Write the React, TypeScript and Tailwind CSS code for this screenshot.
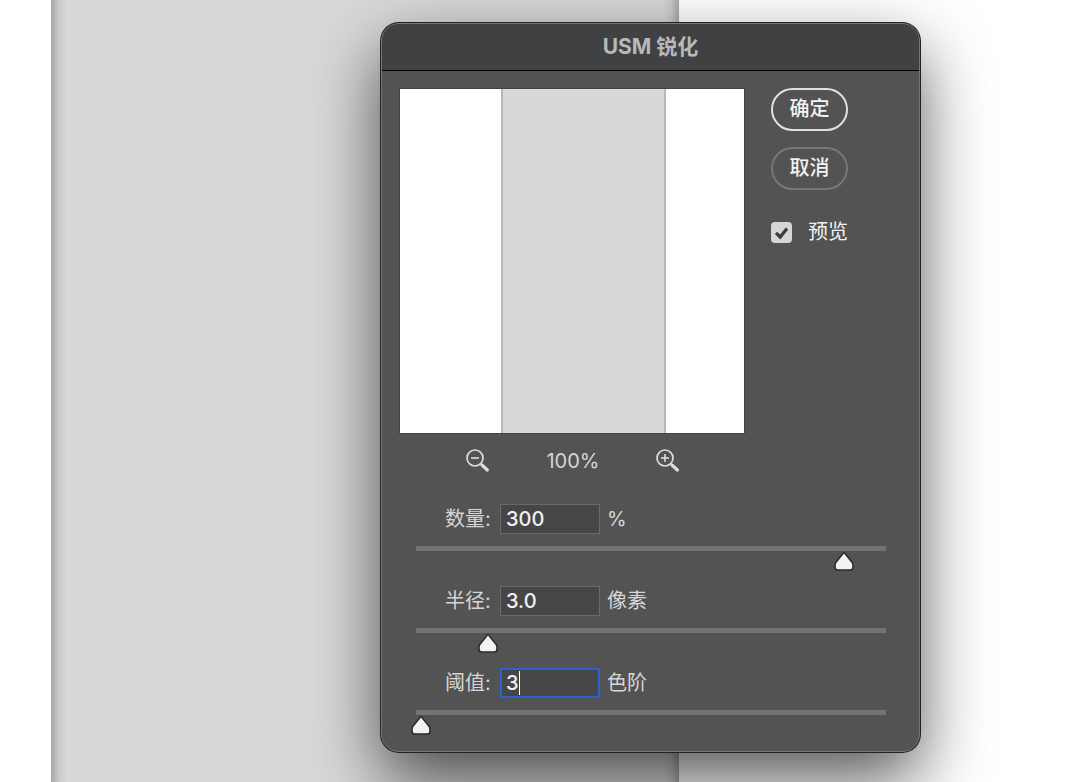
import { useState } from 'react';

interface Field {
    id: string;
    label: string;
    value: string;
    unit: string;
    position: number;
    active?: boolean;
}

const fields: Field[] = [
    { id: 'amount', label: '数量', value: '300', unit: '%', position: 911 },
    { id: 'radius', label: '半径', value: '3.0', unit: '像素', position: 153 },
    { id: 'threshold', label: '阈值', value: '3', unit: '色阶', position: 11, active: true },
];

function ZoomIcon({ plus = false }: { plus?: boolean }) {
    return (
        <svg width="26" height="26" viewBox="0 0 26 26" fill="none" stroke="#dcdcdc">
            <circle cx="10" cy="10" r="8" strokeWidth="1.7" />
            <path d="M6 10h8" strokeWidth="1.6" />
            {plus && <path d="M10 6v8" strokeWidth="1.6" />}
            <path d="M15.8 15.8l2.2 2.2" strokeWidth="2" />
            <path d="M17.2 17.2l5.2 4.8" strokeWidth="3.2" strokeLinecap="round" />
        </svg>
    );
}

function SliderField({ field }: { field: Field }) {
    const [position, setPosition] = useState(field.position);

    return (
        <div>
            <div className="ml-[29px] flex h-[30px] items-center">
                <label htmlFor={field.id} className="w-[55px]">
                    {field.label}:
                </label>
                <div className="relative">
                    <input
                        id={field.id}
                        type="text"
                        defaultValue={field.value}
                        className={`block h-[30px] w-[100px] bg-[#464646] text-[20px] font-medium text-[#f0f0f0] outline-none ${
                            field.active
                                ? 'border-2 border-[#2b62d1] px-1'
                                : 'border border-[#696969] px-[5px]'
                        }`}
                    />
                    {field.active && (
                        <span className="pointer-events-none absolute top-[3px] left-[19px] h-6 w-px bg-white" />
                    )}
                </div>
                <label htmlFor={`${field.id}-slider`} className="ml-[7px]">
                    {field.unit}
                </label>
            </div>
            <div className="relative mt-3 h-[40px]">
                <div className="h-[5px] bg-[#737373]" />
                <svg
                    className="absolute top-[5px] -translate-x-1/2"
                    style={{ left: `${position / 10}%` }}
                    width="20"
                    height="20"
                    viewBox="0 0 20 20"
                >
                    <path
                        d="M10 1.3L18 11.2Q19 12.4 19 14V16.2Q19 19 16.2 19H3.8Q1 19 1 16.2V14Q1 12.4 2 11.2Z"
                        fill="#f2f2f2"
                        stroke="#2c2c2c"
                        strokeWidth="1.6"
                        strokeLinejoin="round"
                    />
                </svg>
                <input
                    id={`${field.id}-slider`}
                    type="range"
                    min={0}
                    max={1000}
                    value={position}
                    onChange={(e) => setPosition(Number(e.target.value))}
                    className="absolute inset-x-0 top-0 h-6 w-full cursor-pointer opacity-0"
                />
            </div>
        </div>
    );
}

function PreviewPane() {
    return (
        <div className="flex h-[346px] w-[346px] border border-[#444444] bg-white">
            <div className="ml-[101px] w-[165px] border-x-2 border-[#b8b8b8] bg-[#d8d8d8]" />
        </div>
    );
}

export default function App() {
    const [preview, setPreview] = useState(true);

    return (
        <div className="relative flex min-h-screen overflow-hidden bg-white font-['Inter','Noto_Sans_CJK_SC',sans-serif] text-[20px] leading-[30px] text-[#d6d6d6]">
            {/* grey strip with soft darker edges on both sides */}
            <div className="ml-[51px] flex w-[628px] justify-between bg-[#d8d8d8]">
                <div className="w-4 bg-linear-to-r from-[#a8a8a8] via-[#cbcbcb] to-[#d8d8d8]" />
                <div className="w-4 bg-linear-to-l from-[#a8a8a8] via-[#cbcbcb] to-[#d8d8d8]" />
            </div>

            <div
                role="dialog"
                aria-labelledby="dialog-title"
                className="absolute top-[23px] left-[381px] w-[539px] overflow-hidden rounded-[18px] border border-[#777777] bg-[#535353] pb-px shadow-[0_0_0_1px_#222222,0_28px_68px_0_rgba(0,0,0,0.66)]"
            >
                <header className="flex h-[47px] items-center justify-center border-b border-black bg-[#404143]">
                    <h1 id="dialog-title" className="text-[21px] font-bold text-[#b7b8b9]">
                        USM 锐化
                    </h1>
                </header>

                <div className="flex gap-[26px] pt-[17px] pl-[17px]">
                    <div>
                        <PreviewPane />
                        <div className="mt-3 flex items-center justify-between pr-16 pl-[66px]">
                            <button type="button" aria-label="缩小">
                                <ZoomIcon />
                            </button>
                            <span>100%</span>
                            <button type="button" aria-label="放大">
                                <ZoomIcon plus />
                            </button>
                        </div>
                    </div>

                    <div className="flex flex-col items-start text-[#f2f2f2]">
                        <button
                            type="button"
                            className="h-[43px] w-[77px] rounded-full border-2 border-[#e0e0e0] pb-px font-medium"
                        >
                            确定
                        </button>
                        <button
                            type="button"
                            className="mt-4 h-[43px] w-[77px] rounded-full border-2 border-[#777777] pb-px font-medium"
                        >
                            取消
                        </button>
                        <label className="mt-[27px] flex items-center gap-4">
                            <span className="relative flex">
                                <input
                                    type="checkbox"
                                    checked={preview}
                                    onChange={(e) => setPreview(e.target.checked)}
                                    className="size-[21px] appearance-none rounded-[4px] bg-[#d6d6d6]"
                                />
                                {preview && (
                                    <svg
                                        className="pointer-events-none absolute inset-0"
                                        width="21"
                                        height="21"
                                        viewBox="0 0 21 21"
                                        fill="none"
                                    >
                                        <path d="M5 10.8l4.2 4.2L16 6.5" stroke="#3c3c3c" strokeWidth="3.2" />
                                    </svg>
                                )}
                            </span>
                            预览
                        </label>
                    </div>
                </div>

                <div className="mt-7 flex flex-col pr-[33px] pl-[34px]">
                    {fields.map((field) => (
                        <SliderField key={field.id} field={field} />
                    ))}
                </div>
            </div>
        </div>
    );
}
